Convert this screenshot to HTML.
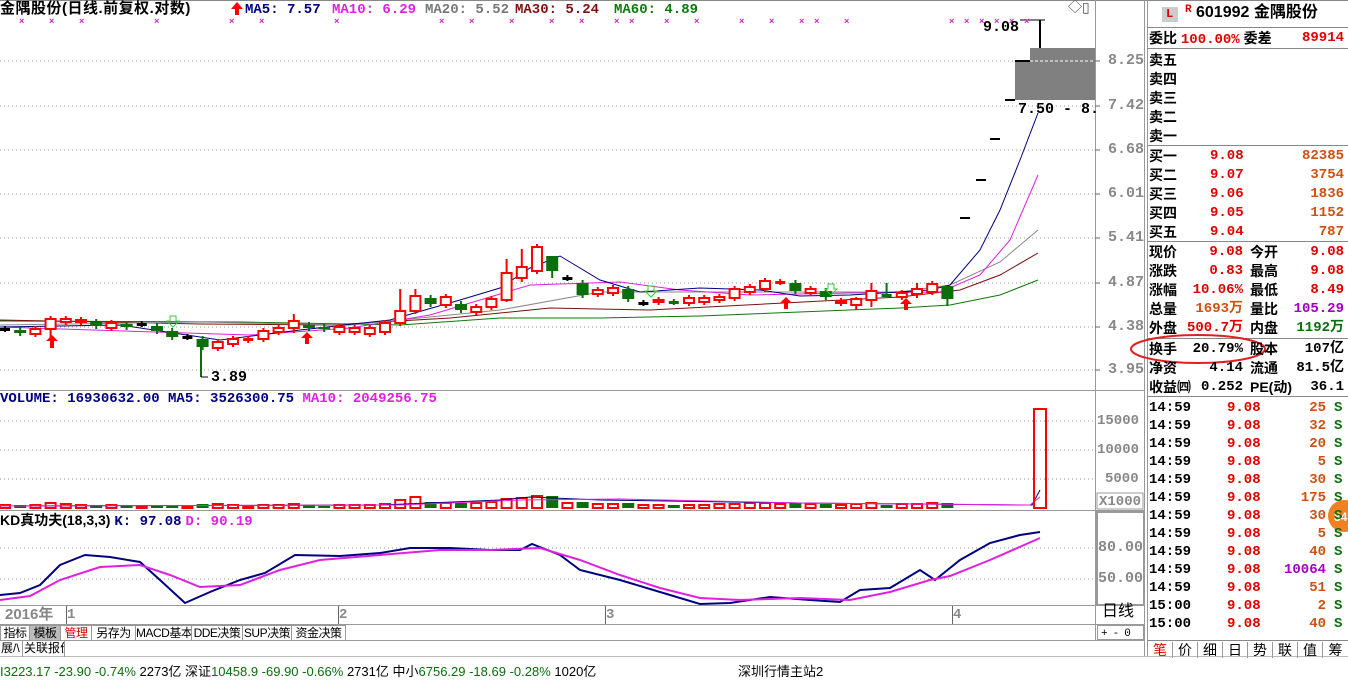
<!DOCTYPE html>
<html><head><meta charset="utf-8">
<style>
*{margin:0;padding:0;box-sizing:border-box}
body{width:1348px;height:670px;overflow:hidden;background:#fff;position:relative;font-family:"Liberation Mono","Noto Sans CJK SC",monospace;font-weight:bold;font-size:14px;color:#000}
.a{position:absolute;white-space:nowrap;line-height:16px}
.cn{font-family:"Liberation Sans","Noto Sans CJK SC",sans-serif}
.rp .a{font-size:14px}
.r{color:#e00000}.o{color:#d05010}.g{color:#0a6e0a}.p{color:#a000c0}
.ax{color:#888;font-weight:bold;font-size:14px}
.tab{position:absolute;top:625px;height:16px;border:1px solid #999;font-size:12px;line-height:14px;font-weight:normal;background:#fff;text-align:center;overflow:hidden;letter-spacing:-0.5px;white-space:nowrap}
.bt{position:absolute;top:640px;height:17px;border-right:1px solid #999;font-size:12px;line-height:17px;padding:0 1px;font-weight:normal;white-space:nowrap;overflow:hidden}
</style></head><body>
<svg width="1348" height="670" style="position:absolute;left:0;top:0" id="sv">
<line x1="0" y1="0.5" x2="1348" y2="0.5" stroke="#888"/>
<line x1="1095.5" y1="0" x2="1095.5" y2="640" stroke="#999"/>
<line x1="1144.5" y1="0" x2="1144.5" y2="657" stroke="#999"/>
<line x1="1147.5" y1="0" x2="1147.5" y2="657" stroke="#999"/>
<line x1="0" y1="390.5" x2="1145" y2="390.5" stroke="#999"/>
<line x1="0" y1="510.5" x2="1145" y2="510.5" stroke="#999"/>
<line x1="0" y1="605.5" x2="1145" y2="605.5" stroke="#999"/>
<line x1="0" y1="624.5" x2="1145" y2="624.5" stroke="#999"/>
<line x1="0" y1="640.5" x2="1145" y2="640.5" stroke="#999"/>
<line x1="0" y1="656.5" x2="1348" y2="656.5" stroke="#bbb"/>
<rect x="1097" y="512" width="47" height="93" fill="none" stroke="#999" stroke-width="2"/>
<rect x="1097" y="493" width="46" height="16" fill="none" stroke="#999"/>
<g stroke="#999" stroke-dasharray="1,3">
<line x1="0" y1="61" x2="1095" y2="61"/><line x1="0" y1="106" x2="1095" y2="106"/>
<line x1="0" y1="150" x2="1095" y2="150"/><line x1="0" y1="194" x2="1095" y2="194"/>
<line x1="0" y1="238" x2="1095" y2="238"/><line x1="0" y1="283" x2="1095" y2="283"/>
<line x1="0" y1="327" x2="1095" y2="327"/><line x1="0" y1="370" x2="1095" y2="370"/>
<line x1="0" y1="421" x2="1095" y2="421"/><line x1="0" y1="450" x2="1095" y2="450"/>
<line x1="0" y1="479" x2="1095" y2="479"/>
<line x1="0" y1="548" x2="1095" y2="548"/><line x1="0" y1="579" x2="1095" y2="579"/>
</g>
<g stroke="#666">
<line x1="1095" y1="61" x2="1100" y2="61"/><line x1="1095" y1="106" x2="1100" y2="106"/><line x1="1095" y1="150" x2="1100" y2="150"/><line x1="1095" y1="194" x2="1100" y2="194"/><line x1="1095" y1="238" x2="1100" y2="238"/><line x1="1095" y1="283" x2="1100" y2="283"/><line x1="1095" y1="327" x2="1100" y2="327"/><line x1="1095" y1="370" x2="1100" y2="370"/>
<line x1="66.5" y1="606" x2="66.5" y2="624"/><line x1="338.5" y1="606" x2="338.5" y2="624"/><line x1="605.5" y1="606" x2="605.5" y2="624"/><line x1="952.5" y1="606" x2="952.5" y2="624"/>
</g>
<rect x="1015" y="61" width="80" height="39" fill="#808080"/>
<rect x="1030" y="48" width="65" height="14" fill="#808080"/>
<line x1="1015" y1="61" x2="1095" y2="61" stroke="#fff" stroke-dasharray="3,2"/>
<g fill="none" stroke-width="1">
<polyline stroke="#0a7a0a" points="0,321 240,322 400,325 500,318 600,318 700,316 900,308 950,305 1000,295 1038,280"/>
<polyline stroke="#7a1010" points="0,320 200,324 330,325 450,318 550,308 650,310 900,297 960,290 1000,275 1038,253"/>
<polyline stroke="#888" points="0,325 200,322 350,325 500,310 600,292 900,292 950,285 1000,262 1038,230"/>
<polyline stroke="#e020e0" points="0,327 250,335 350,328 430,315 480,300 530,285 620,282 680,290 750,295 850,293 940,292 980,275 1010,240 1038,175"/>
<polyline stroke="#000080" points="0,327 120,325 220,340 300,330 390,320 460,300 500,288 530,268 560,256 600,280 640,292 700,288 760,290 800,296 850,295 930,290 950,285 980,250 1000,210 1020,160 1038,113"/>
</g>
<g id="cd"></g>
<g fill="#f00">
<polygon points="52,335 46,341 50,341 50,348 54,348 54,341 58,341"/>
<polygon points="307,332 301,338 305,338 305,344 309,344 309,338 313,338"/>
<polygon points="786,297 780,303 784,303 784,309 788,309 788,303 792,303"/>
<polygon points="906,298 900,304 904,304 904,310 908,310 908,304 912,304"/>
<polygon points="237,2 231,9 235,9 235,15 239,15 239,9 243,9"/>
</g>
<g fill="none" stroke="#3c3">
<polygon points="173,327 167,321 170,321 170,316 176,316 176,321 179,321"/>
<polygon points="651,297 645,291 648,291 648,286 654,286 654,291 657,291"/>
<polygon points="831,295 825,289 828,289 828,284 834,284 834,289 837,289"/>
</g>
<line x1="201" y1="347" x2="201" y2="377" stroke="#0a6e0a" stroke-width="2"/>
<line x1="201" y1="377" x2="208" y2="377" stroke="#000"/>
<line x1="1040" y1="20" x2="1040" y2="48" stroke="#000" stroke-width="2"/>
<line x1="1020" y1="20" x2="1045" y2="20" stroke="#000"/>
<g stroke="#000" stroke-width="2">
<line x1="960" y1="218" x2="970" y2="218"/><line x1="976" y1="180" x2="986" y2="180"/>
<line x1="990" y1="139" x2="1000" y2="139"/><line x1="1005" y1="100" x2="1015" y2="100"/>
<line x1="1015" y1="61" x2="1030" y2="61"/>
</g>
<g fill="#d020d0" font-size="9" id="xm"></g>
<g id="vol"></g>
<polyline fill="none" stroke="#000080" points="0,506 380,505 500,500 530,497 600,500 800,503 1020,505 1032,505 1040,490"/>
<polyline fill="none" stroke="#e020e0" points="0,506 400,505 520,500 620,499 800,503 1030,505 1040,497"/>
<rect x="1034" y="409" width="12" height="99" fill="none" stroke="#f00" stroke-width="2"/>
<polyline fill="none" stroke="#000080" stroke-width="2" points="0,595 20,593 40,585 60,565 85,555 110,557 140,562 160,580 185,603 210,592 240,580 265,573 295,555 340,556 380,553 410,548 450,548 490,550 520,550 532,544 560,555 580,570 620,580 660,592 700,604 730,603 770,597 810,600 840,602 860,590 890,588 920,570 935,580 960,560 990,543 1020,535 1040,532"/>
<polyline fill="none" stroke="#e020e0" stroke-width="2" points="0,600 30,596 60,580 100,567 140,565 170,575 200,587 240,585 280,570 320,560 380,555 440,550 490,550 540,548 580,560 620,575 660,588 700,598 740,600 800,598 850,600 890,592 930,580 950,576 990,560 1040,538"/>
<g stroke="#888">
<line x1="1147" y1="27.5" x2="1348" y2="27.5"/><line x1="1147" y1="48.5" x2="1348" y2="48.5"/>
<line x1="1147" y1="145.5" x2="1348" y2="145.5"/><line x1="1147" y1="241.5" x2="1348" y2="241.5"/>
<line x1="1147" y1="338.5" x2="1348" y2="338.5"/><line x1="1147" y1="396.5" x2="1348" y2="396.5"/>
<line x1="1147" y1="640.5" x2="1348" y2="640.5"/>
</g>
<ellipse cx="1198" cy="349" rx="67" ry="14" fill="none" stroke="#e02020" stroke-width="2"/>
<circle cx="1344" cy="516" r="16" fill="#f08020"/>
<text x="1334" y="521" fill="#fff" font-size="12" font-family="Liberation Sans">84</text>
<rect x="1162" y="7" width="16" height="15" fill="#ccc"/>
</svg>

<div class="a cn" style="left:0;top:1px;font-size:15px;letter-spacing:0.5px">金隅股份(日线.前复权.对数)</div>
<div class="a" style="left:245px;top:2px;color:#000080">MA5: 7.57</div>
<div class="a" style="left:332px;top:2px;color:#e020e0">MA10: 6.29</div>
<div class="a" style="left:425px;top:2px;color:#777">MA20: 5.52</div>
<div class="a" style="left:515px;top:2px;color:#801010">MA30: 5.24</div>
<div class="a" style="left:614px;top:2px;color:#0a7a0a">MA60: 4.89</div>
<div class="a" style="left:1068px;top:1px;font-weight:normal;color:#555">◇▯</div>
<div class="a" style="left:983px;top:20px;font-size:15px">9.08</div>
<div class="a" style="left:1018px;top:102px;font-size:15px">7.50 - 8.</div>
<div class="a" style="left:211px;top:370px;font-size:15px">3.89</div>
<div class="a ax" style="left:1108px;top:53px;font-size:15px">8.25</div>
<div class="a ax" style="left:1108px;top:98px;font-size:15px">7.42</div>
<div class="a ax" style="left:1108px;top:142px;font-size:15px">6.68</div>
<div class="a ax" style="left:1108px;top:186px;font-size:15px">6.01</div>
<div class="a ax" style="left:1108px;top:230px;font-size:15px">5.41</div>
<div class="a ax" style="left:1108px;top:275px;font-size:15px">4.87</div>
<div class="a ax" style="left:1108px;top:319px;font-size:15px">4.38</div>
<div class="a ax" style="left:1108px;top:362px;font-size:15px">3.95</div>
<div class="a" style="left:0;top:391px;color:#000080">VOLUME: 16930632.00 <span style="color:#000080">MA5: 3526300.75</span> <span style="color:#e020e0">MA10: 2049256.75</span></div>
<div class="a ax" style="left:1097px;top:413px">15000</div>
<div class="a ax" style="left:1097px;top:442px">10000</div>
<div class="a ax" style="left:1105px;top:471px">5000</div>
<div class="a ax" style="left:1099px;top:494px">X1000</div>
<div class="a cn" style="left:0;top:512px">KD真功夫(18,3,3) <span style="color:#000080;font-family:'Liberation Mono'">K: 97.08</span> <span style="color:#e020e0;font-family:'Liberation Mono'">D: 90.19</span></div>
<div class="a ax" style="left:1098px;top:540px;font-size:15px">80.00</div>
<div class="a ax" style="left:1098px;top:571px;font-size:15px">50.00</div>
<div class="a ax cn" style="left:5px;top:607px;font-size:15px">2016年</div>
<div class="a ax" style="left:67px;top:607px">1</div>
<div class="a ax" style="left:339px;top:607px">2</div>
<div class="a ax" style="left:606px;top:607px">3</div>
<div class="a ax" style="left:953px;top:607px">4</div>
<div class="a cn" style="left:1102px;top:604px;font-size:16px;font-weight:normal">日线</div>
<div class="a" style="left:1097px;top:625px;font-size:11px;font-weight:normal;border:1px solid #999;width:47px;height:15px;letter-spacing:5px;padding-left:3px">+-0</div>

<div class="tab cn" style="left:0;width:30px">指标</div>
<div class="tab cn" style="left:29px;width:32px;background:#bbb">模板</div>
<div class="tab cn" style="left:60px;width:32px;color:#d00">管理</div>
<div class="tab cn" style="left:91px;width:45px">另存为</div>
<div class="tab cn" style="left:135px;width:57px">MACD基本</div>
<div class="tab cn" style="left:191px;width:52px">DDE决策</div>
<div class="tab cn" style="left:242px;width:50px">SUP决策</div>
<div class="tab cn" style="left:291px;width:55px">资金决策</div>
<div class="bt cn" style="left:0;width:23px">展/\</div>
<div class="bt cn" style="left:23px;width:42px">关联报价</div>
<div class="a cn" style="left:0;top:664px;font-size:13px;font-weight:normal;color:#0a6e0a">I3223.17 -23.90 -0.74% <span style="color:#000">2273亿</span> <span style="color:#000">深证</span>10458.9 -69.90 -0.66% <span style="color:#000">2731亿 中小</span>6756.29 -18.69 -0.28% <span style="color:#000">1020亿</span></div>
<div class="a cn" style="left:738px;top:664px;font-size:13px;font-weight:normal">深圳行情主站2</div>

<div class="rp">
<div class="a" style="left:1166px;top:6px;color:#d00;font-size:12px">L</div>
<div class="a" style="left:1185px;top:2px;color:#d00;font-size:11px">R</div>
<div class="a cn" style="left:1196px;top:5px;font-size:16px">601992 金隅股份</div>
<div class="a cn" style="left:1149px;top:30px">委比 <span class="r" style="font-family:'Liberation Mono'">100.00%</span> 委差</div>
<div class="a r" style="right:4px;top:30px">89914</div>
<div class="a cn" style="left:1149px;top:51px;line-height:19px">卖五<br>卖四<br>卖三<br>卖二<br>卖一</div>
<div class="a cn" style="left:1149px;top:147px;line-height:19px">买一<br>买二<br>买三<br>买四<br>买五</div>
<div class="a r" style="left:1210px;top:147px;line-height:19px">9.08<br>9.07<br>9.06<br>9.05<br>9.04</div>
<div class="a o" style="right:4px;top:147px;line-height:19px;text-align:right">82385<br>3754<br>1836<br>1152<br>787</div>
<div class="a cn" style="left:1149px;top:243px;line-height:19px">现价<br>涨跌<br>涨幅<br>总量<br>外盘</div>
<div class="a r" style="right:105px;top:243px;line-height:19px;text-align:right">9.08<br>0.83<br>10.06%<br><span class="o">1693万</span><br>500.7万</div>
<div class="a cn" style="left:1250px;top:243px;line-height:19px">今开<br>最高<br>最低<br>量比<br>内盘</div>
<div class="a r" style="right:4px;top:243px;line-height:19px;text-align:right">9.08<br>9.08<br>8.49<br><span class="p">105.29</span><br><span class="g">1192万</span></div>
<div class="a cn" style="left:1149px;top:340px;line-height:19px">换手<br>净资<br>收益㈣</div>
<div class="a" style="right:105px;top:340px;line-height:19px;text-align:right">20.79%<br>4.14<br>0.252</div>
<div class="a cn" style="left:1250px;top:340px;line-height:19px">股本<br>流通<br>PE(动)</div>
<div class="a" style="right:4px;top:340px;line-height:19px;text-align:right">107亿<br>81.5亿<br>36.1</div>
<div class="a" style="left:1149px;top:399px;line-height:18px">14:59<br>14:59<br>14:59<br>14:59<br>14:59<br>14:59<br>14:59<br>14:59<br>14:59<br>14:59<br>14:59<br>15:00<br>15:00</div>
<div class="a r" style="left:1227px;top:399px;line-height:18px">9.08<br>9.08<br>9.08<br>9.08<br>9.08<br>9.08<br>9.08<br>9.08<br>9.08<br>9.08<br>9.08<br>9.08<br>9.08</div>
<div class="a o" style="right:22px;top:399px;line-height:18px;text-align:right">25<br>32<br>20<br>5<br>30<br>175<br>30<br>5<br>40<br><span class="p">10064</span><br>51<br>2<br>40</div>
<div class="a g" style="left:1334px;top:399px;line-height:18px">S<br>S<br>S<br>S<br>S<br>S<br>S<br>S<br>S<br>S<br>S<br>S<br>S</div>
<div class="a cn" style="left:1148px;top:642px;font-weight:normal;font-size:14px;word-spacing:0">
<span style="color:#d00;display:inline-block;width:25px;text-align:center;border-right:1px solid #999">笔</span><span style="display:inline-block;width:25px;text-align:center;border-right:1px solid #999">价</span><span style="display:inline-block;width:25px;text-align:center;border-right:1px solid #999">细</span><span style="display:inline-block;width:25px;text-align:center;border-right:1px solid #999">日</span><span style="display:inline-block;width:25px;text-align:center;border-right:1px solid #999">势</span><span style="display:inline-block;width:25px;text-align:center;border-right:1px solid #999">联</span><span style="display:inline-block;width:25px;text-align:center;border-right:1px solid #999">值</span><span style="display:inline-block;width:25px;text-align:center">筹</span></div>
</div>

<script>
var NS="http://www.w3.org/2000/svg";
function el(p,t,a){var e=document.createElementNS(NS,t);for(var k in a)e.setAttribute(k,a[k]);p.appendChild(e);return e;}
var D=[[329,329,'k'],[330,333,'g'],[329,334,'r'],[319,329,'r',316,340],[319,322,'r'],[320,322,'r'],[322,326,'g'],[323,328,'r'],[324,327,'g'],[324,324,'k'],[326,331,'g'],[331,337,'g'],[337,337,'k'],[339,347,'g'],[342,348,'r'],[339,344,'r'],[339,340,'r'],[331,339,'r'],[328,332,'r'],[321,328,'r',314,333],[325,328,'g'],[327,329,'g'],[327,332,'r'],[328,332,'r'],[328,334,'r'],[323,332,'r'],[311,323,'r',289,326],[296,311,'r',289,314],[298,304,'g'],[297,305,'r'],[304,310,'g'],[307,312,'r'],[299,307,'r'],[273,300,'r',259,302],[267,278,'r',249,282],[247,271,'r'],[256,271,'g',256,278],[278,278,'k'],[283,295,'g'],[290,294,'r'],[288,293,'r'],[289,299,'g'],[303,303,'k'],[300,302,'r'],[302,302,'g'],[298,303,'r'],[298,302,'r'],[297,300,'r'],[289,298,'r'],[287,292,'r'],[281,289,'r'],[282,282,'r'],[283,291,'g'],[289,293,'r'],[291,297,'g'],[301,303,'r'],[299,305,'r',297,310],[291,300,'r',283,307],[295,295,'g',283,297],[293,297,'r'],[289,294,'r',283,298],[284,292,'r'],[286,299,'g',286,306]];
var g=document.getElementById('cd'),v=document.getElementById('vol');
var VH=[3,3,3,5,4,3,3,3,3,2,3,3,2,4,4,3,2,3,3,4,3,2,3,3,3,4,8,11,6,5,5,5,6,9,10,12,12,5,6,4,4,5,3,3,3,3,3,4,4,5,5,4,5,4,4,3,4,5,3,4,4,5,5];
D.forEach(function(d,i){var x=5+15.2*i,c=d[2]=='r'?'#f00':(d[2]=='g'?'#0a6e0a':'#000');
var h=d[3]||d[0]-3,l=d[4]||d[1]+3;
el(g,'line',{x1:x,y1:h,x2:x,y2:l,stroke:c,'stroke-width':2});
if(d[1]-d[0]<2){el(g,'rect',{x:x-5,y:d[0]-1,width:10,height:3,fill:c});}
else if(d[2]=='r'){el(g,'rect',{x:x-5,y:d[0],width:10,height:d[1]-d[0],fill:'#fff',stroke:c,'stroke-width':2});}
else{el(g,'rect',{x:x-6,y:d[0],width:12,height:d[1]-d[0],fill:c});}
var vh=VH[i]||3;
if(d[2]=='g')el(v,'rect',{x:x-6,y:508-vh,width:12,height:vh,fill:'#0a6e0a'});
else el(v,'rect',{x:x-5,y:508-vh,width:10,height:vh,fill:'#fff',stroke:'#f00','stroke-width':2});
});
var xm=document.getElementById('xm');
[22,52,82,157,232,262,337,442,472,512,552,582,617,632,667,697,742,772,802,817,847,952,967,982,997,1012,1027].forEach(function(x){var t=el(xm,'text',{x:x-3,y:24});t.textContent='×';});
</script>
</body></html>
